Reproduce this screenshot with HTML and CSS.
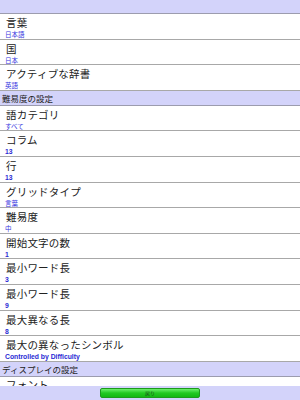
FILE: index.html
```html
<!DOCTYPE html>
<html lang="ja">
<head>
    <meta charset="UTF-8">
    <meta name="viewport" content="width=device-width, initial-scale=1.0">
    <title>設定</title>
    <link rel="stylesheet" href="styles.css">
</head>
<body>
    <div class="screen">
        <div class="topbar"></div>
        <div class="list">
            <div class="row"><span class="label">言葉</span><span class="value">日本語</span></div>
            <div class="row"><span class="label">国</span><span class="value">日本</span></div>
            <div class="row"><span class="label">アクティブな辞書</span><span class="value">英語</span></div>

            <div class="section">難易度の設定</div>
            <div class="row"><span class="label">語カテゴリ</span><span class="value">すべて</span></div>
            <div class="row"><span class="label">コラム</span><span class="value num">13</span></div>
            <div class="row"><span class="label">行</span><span class="value num">13</span></div>
            <div class="row"><span class="label">グリッドタイプ</span><span class="value">言葉</span></div>
            <div class="row"><span class="label">難易度</span><span class="value">中</span></div>
            <div class="row"><span class="label">開始文字の数</span><span class="value num">1</span></div>
            <div class="row"><span class="label">最小ワード長</span><span class="value num">3</span></div>
            <div class="row"><span class="label">最小ワード長</span><span class="value num">9</span></div>
            <div class="row"><span class="label">最大異なる長</span><span class="value num">8</span></div>
            <div class="row"><span class="label">最大の異なったシンボル</span><span class="value num">Controlled by Difficulty</span></div>

            <div class="section">ディスプレイの設定</div>
            <div class="row last"><span class="label">フォント</span></div>
        </div>
        <div class="bottombar">
            <button class="back">戻り</button>
        </div>
    </div>
</body>
</html>
```

FILE: styles.css
```css
body {
    margin: 0;
    padding: 0;
    font-family: "Noto Sans CJK JP", "Liberation Sans", sans-serif;
    background: #fff;
}

.screen {
    width: 300px;
    height: 400px;
    display: flex;
    flex-direction: column;
    overflow: hidden;
}

.topbar {
    height: 13px;
    flex: none;
    background: #d3d3fa;
    border-bottom: 1px solid #9c9cae;
}

.list {
    flex: 1;
    overflow: hidden;
}

.row {
    height: 25.6px;
    box-sizing: border-box;
    border-bottom: 1px solid #a8a8a8;
    padding: 2px 0 0 6px;
    display: flex;
    flex-direction: column;
}

.row.last {
    padding-top: 1px;
}

.label {
    font-size: 10.5px;
    line-height: 13px;
    color: #222;
    letter-spacing: 0.2px;
}

.value {
    font-size: 6.5px;
    line-height: 9px;
    margin-top: 1px;
    margin-left: -1px;
    color: #3636e0;
}

.num {
    font-family: "Liberation Sans", Arial, sans-serif;
    font-weight: bold;
    font-size: 6.8px;
    color: #2a2ad4;
}

.section {
    height: 15px;
    box-sizing: border-box;
    background: #d3d3fa;
    border-bottom: 1px solid #9c9cae;
    padding-left: 2px;
    font-size: 8.5px;
    line-height: 14px;
    color: #222;
}

.bottombar {
    height: 14px;
    flex: none;
    background: #d3d3fa;
    display: flex;
    justify-content: center;
    align-items: center;
}

.back {
    width: 100px;
    height: 10px;
    padding: 0;
    border: 1px solid #1c9a1c;
    border-radius: 2px;
    background: linear-gradient(to bottom, #6cf06c, #22c922 50%, #14b814);
    color: #1a4a1a;
    font-family: "Noto Sans CJK JP", sans-serif;
    font-size: 5px;
    line-height: 8px;
}
```
